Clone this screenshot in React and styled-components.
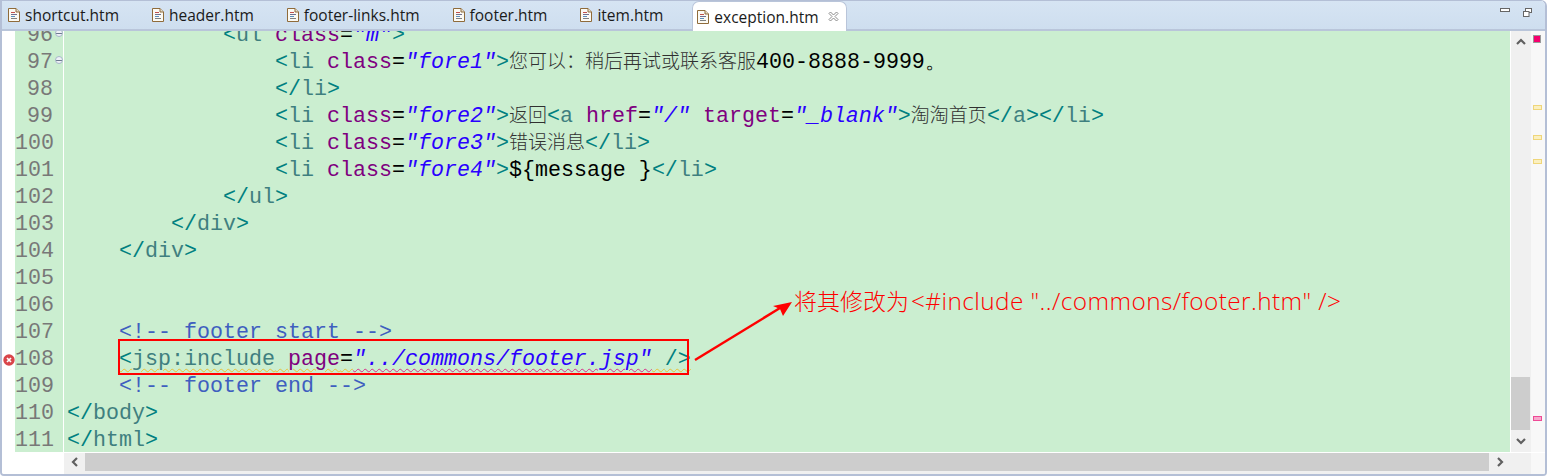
import React from 'react'
import styled, { createGlobalStyle } from 'styled-components'

const GlobalStyle = createGlobalStyle`
  html, body {
    margin: 0;
    padding: 0;
    background: #ffffff;
  }
`

const Window = styled.div`
  position: relative;
  box-sizing: border-box;
  width: 1547px;
  height: 476px;
  display: flex;
  flex-direction: column;
  border: 2px solid #b4bfd6;
  border-top-width: 1px;
  border-radius: 0 6px 4px 4px;
  background: #ffffff;
  overflow: hidden;
`

const TabBar = styled.div`
  height: 30px;
  flex: none;
  display: flex;
  align-items: stretch;
  box-sizing: border-box;
  border-bottom: 2px solid #b9c5da;
  background: linear-gradient(#d6e4f3, #cedeef);
  padding-left: 6px;
`

const Tab = styled.div`
  display: flex;
  align-items: center;
  gap: 5px;
  height: ${props => (props.active ? '30px' : '28px')};
  box-sizing: border-box;
  padding: ${props => (props.active ? '0 7px 0 4px' : '0 33px 0 0')};
  margin-left: ${props => (props.active ? '-4px' : '0')};
  background: ${props => (props.active ? '#ffffff' : 'transparent')};
  border: ${props => (props.active ? '1px solid #b9c5da' : 'none')};
  border-bottom: none;
  border-radius: 7px 7px 0 0;
  font-family: 'Open Sans', 'Liberation Sans', sans-serif;
  font-size: 15.5px;
  color: #1a1a1a;
  white-space: nowrap;
`

const TabClose = styled.span`
  display: flex;
  margin-left: 4px;
`

const WindowButtons = styled.div`
  margin-left: auto;
  display: flex;
  align-items: flex-start;
  gap: 13px;
  padding: 7px 13px 0 0;
`

const EditorRow = styled.div`
  flex: 1;
  min-height: 0;
  display: flex;
`

const CodeArea = styled.div`
  flex: 1;
  min-width: 0;
  overflow: hidden;
  background: #ffffff;
`

const Lines = styled.div`
  margin-top: -9px;
`

const Line = styled.div`
  display: grid;
  grid-template-columns: 13px 48px 1px 1fr;
  height: 27px;
`

const Marker = styled.div`
  display: flex;
  align-items: center;
  justify-content: flex-end;
  background: #ffffff;
`

const LineNumber = styled.div`
  position: relative;
  box-sizing: border-box;
  padding-right: 10px;
  background: #cbeed0;
  text-align: right;
  font-family: 'Liberation Mono', monospace;
  font-size: 21.67px;
  line-height: 27px;
  color: #787878;
`

const Fold = styled.span`
  position: absolute;
  top: 7px;
  right: 0;
  width: 8px;
  height: 8px;
  box-sizing: border-box;
  border: 1px solid #a9b6cc;
  border-radius: 50%;
  background: linear-gradient(to bottom, #eef1f6 3px, #6d7a90 3px, #6d7a90 4px, #eef1f6 4px);
`

const Separator = styled.div`
  background: #ffffff;
`

const Code = styled.div`
  background: #cbeed0;
  padding-left: 3px;
  font-family: 'Liberation Mono', monospace;
  font-size: 21.67px;
  line-height: 27px;
  white-space: pre;
  color: #000000;
`

const Bracket = styled.span`
  color: #008080;
`

const TagName = styled.span`
  color: #3f7f7f;
`

const Attr = styled.span`
  color: #7f007f;
`

const Value = styled.span`
  color: #2a00ff;
  font-style: italic;
`

const Note = styled.span`
  color: #3f5fbf;
`

const Cjk = styled.span`
  font-family: 'Noto Sans CJK SC', sans-serif;
  font-size: 19px;
  font-weight: 300;
  line-height: 0;
  color: #303030;
`

const Squiggle = styled.span`
  text-decoration: underline wavy ${props => props.color};
  text-decoration-thickness: 1px;
  text-underline-offset: 3px;
`

const VScroll = styled.div`
  width: 20px;
  flex: none;
  margin-left: 1px;
  display: flex;
  flex-direction: column;
  background: #f0f0f0;
`

const ArrowButton = styled.div`
  flex: none;
  height: ${props => props.size}px;
  display: flex;
  align-items: center;
  justify-content: center;
`

const VTrack = styled.div`
  flex: 1;
`

const VThumb = styled.div`
  flex: none;
  width: 19px;
  height: 53px;
  background: #cdcdcd;
`

const Overview = styled.div`
  position: relative;
  width: 14px;
  flex: none;
  background: #f8f8f8;
`

const Mark = styled.div`
  position: absolute;
  left: 2px;
  top: ${props => props.top}px;
  width: 9px;
  height: 5px;
  box-sizing: border-box;
  border: 1px solid ${props => props.border};
  background: ${props => props.fill};
`

const ErrorSquare = styled.div`
  position: absolute;
  left: 2px;
  top: 4px;
  width: 8px;
  height: 8px;
  box-sizing: border-box;
  border: 1px solid #999999;
  background: #f5006e;
`

const BottomRow = styled.div`
  flex: none;
  height: 21px;
  margin-top: 1px;
  display: flex;
  background: #ffffff;
`

const HSpacer = styled.div`
  width: 62px;
  flex: none;
`

const HScroll = styled.div`
  flex: 1;
  display: flex;
  background: #f0f0f0;
`

const HThumb = styled.div`
  flex: 1;
  height: 18px;
  background: #cdcdcd;
`

const HArrow = styled.div`
  flex: none;
  width: ${props => props.size}px;
  height: 18px;
  display: flex;
  align-items: center;
  justify-content: center;
`

const Corner = styled.div`
  width: 20px;
  flex: none;
  background: #f0f0f0;
`

const OverviewCorner = styled.div`
  width: 14px;
  flex: none;
  background: #f8f8f8;
`

const RedBox = styled.div`
  position: absolute;
  left: 116px;
  top: 338px;
  width: 571px;
  height: 36px;
  box-sizing: border-box;
  border: 2px solid #ff0000;
  pointer-events: none;
`

const Callout = styled.div`
  position: absolute;
  left: 792px;
  top: 285px;
  font-family: 'Open Sans', 'Noto Sans CJK SC', sans-serif;
  font-size: 24.4px;
  font-weight: 300;
  letter-spacing: 0.42px;
  line-height: 30px;
  white-space: nowrap;
  color: #ff0000;
`

const CalloutCjk = styled.span`
  font-family: 'Noto Sans CJK SC', sans-serif;
  font-size: 23px;
  letter-spacing: 0;
  line-height: 0;
  margin-right: 2px;
`

const ArrowSvg = styled.svg`
  position: absolute;
  left: 690px;
  top: 295px;
`

const FileIcon = () => (
  <svg width="12" height="14" viewBox="0 0 12 14">
    <path d="M0.5 0.5H8L11.5 4V13.5H0.5Z" fill="#fbfaf4" stroke="#8f6b3a" />
    <path d="M8 0.5V4H11.5" fill="#e6e0cf" stroke="#8f6b3a" />
    <path d="M3 4.5H7" stroke="#c0504d" />
    <path d="M3 6.5H9" stroke="#6f6f8f" />
    <path d="M3 8.5H7" stroke="#5a8fc0" />
    <path d="M3 10.5H9" stroke="#7f7f7f" />
  </svg>
)

const CloseIcon = () => (
  <svg width="11" height="11" viewBox="0 0 11 11">
    <path
      d="M1 2.5L2.5 1L5.5 4L8.5 1L10 2.5L7 5.5L10 8.5L8.5 10L5.5 7L2.5 10L1 8.5L4 5.5Z"
      fill="#ffffff"
      stroke="#8a8a8a"
    />
  </svg>
)

const MinimizeIcon = () => (
  <svg width="10" height="4" viewBox="0 0 10 4">
    <rect x="0.5" y="0.5" width="9" height="3" fill="#ffffff" stroke="#666666" />
  </svg>
)

const RestoreIcon = () => (
  <svg width="9" height="9" viewBox="0 0 9 9">
    <rect x="2.5" y="0.5" width="6" height="4" fill="#ffffff" stroke="#666666" />
    <rect x="0.5" y="3.5" width="5.5" height="5" fill="#ffffff" stroke="#666666" />
  </svg>
)

const ErrorIcon = () => (
  <svg width="12" height="12" viewBox="0 0 12 12">
    <circle cx="6" cy="6" r="5.7" fill="#d9454a" />
    <path d="M4 4L8 8M8 4L4 8" stroke="#ffffff" strokeWidth="1.7" />
  </svg>
)

const Chevron = ({ points }) => (
  <svg width="10" height="10" viewBox="0 0 10 10">
    <polyline points={points} fill="none" stroke="#606060" strokeWidth="2.2" />
  </svg>
)

const tabs = ['shortcut.htm', 'header.htm', 'footer-links.htm', 'footer.htm', 'item.htm']

const pad = n => ' '.repeat(n)

const Open = ({ name }) => (
  <>
    <Bracket>&lt;</Bracket>
    <TagName>{name}</TagName>
  </>
)

const Close = ({ name }) => (
  <>
    <Bracket>&lt;/</Bracket>
    <TagName>{name}</TagName>
    <Bracket>&gt;</Bracket>
  </>
)

const Li = ({ cls }) => (
  <>
    <Open name="li" /> <Attr>class</Attr>=<Value>"{cls}"</Value>
    <Bracket>&gt;</Bracket>
  </>
)

const rows = [
  { n: 96, fold: true, code: <>{pad(12)}<Open name="ul" /> <Attr>class</Attr>=<Value>"m"</Value><Bracket>&gt;</Bracket></> },
  { n: 97, fold: true, code: <>{pad(16)}<Li cls="fore1" /><Cjk>您可以：稍后再试或联系客服</Cjk>400-8888-9999。</> },
  { n: 98, code: <>{pad(16)}<Close name="li" /></> },
  {
    n: 99,
    code: (
      <>
        {pad(16)}<Li cls="fore2" /><Cjk>返回</Cjk><Open name="a" /> <Attr>href</Attr>=<Value>"/"</Value> <Attr>target</Attr>=<Value>"_blank"</Value><Bracket>&gt;</Bracket>
        <Cjk>淘淘首页</Cjk><Close name="a" /><Close name="li" />
      </>
    )
  },
  { n: 100, code: <>{pad(16)}<Li cls="fore3" /><Cjk>错误消息</Cjk><Close name="li" /></> },
  { n: 101, code: <>{pad(16)}<Li cls="fore4" />{'${message }'}<Close name="li" /></> },
  { n: 102, code: <>{pad(12)}<Close name="ul" /></> },
  { n: 103, code: <>{pad(8)}<Close name="div" /></> },
  { n: 104, code: <>{pad(4)}<Close name="div" /></> },
  { n: 105, code: null },
  { n: 106, code: null },
  { n: 107, code: <>{pad(4)}<Note>&lt;!-- footer start --&gt;</Note></> },
  {
    n: 108,
    error: true,
    code: (
      <>
        {pad(4)}
        <Squiggle color="#e8c23a"><Open name="jsp:include" /> <Attr>page</Attr>=</Squiggle>
        <Squiggle color="#d8308a"><Value>"../commons/footer.jsp"</Value></Squiggle>
        <Squiggle color="#e8c23a"> <Bracket>/&gt;</Bracket></Squiggle>
      </>
    )
  },
  { n: 109, code: <>{pad(4)}<Note>&lt;!-- footer end --&gt;</Note></> },
  { n: 110, code: <Close name="body" /> },
  { n: 111, code: <Close name="html" /> }
]

const App = () => (
  <>
    <GlobalStyle />
    <Window>
      <TabBar>
        {tabs.map(name => (
          <Tab key={name}>
            <FileIcon />
            {name}
          </Tab>
        ))}
        <Tab active>
          <FileIcon />
          exception.htm
          <TabClose>
            <CloseIcon />
          </TabClose>
        </Tab>
        <WindowButtons>
          <MinimizeIcon />
          <RestoreIcon />
        </WindowButtons>
      </TabBar>
      <EditorRow>
        <CodeArea>
          <Lines>
            {rows.map(row => (
              <Line key={row.n}>
                <Marker>{row.error && <ErrorIcon />}</Marker>
                <LineNumber>
                  {row.n}
                  {row.fold && <Fold />}
                </LineNumber>
                <Separator />
                <Code>{row.code}</Code>
              </Line>
            ))}
          </Lines>
        </CodeArea>
        <VScroll>
          <ArrowButton size={22}>
            <Chevron points="1,7 5,3 9,7" />
          </ArrowButton>
          <VTrack />
          <VThumb />
          <ArrowButton size={22}>
            <Chevron points="1,3 5,7 9,3" />
          </ArrowButton>
        </VScroll>
        <Overview>
          <ErrorSquare />
          <Mark top={74} border="#efd67a" fill="#fbf0c0" />
          <Mark top={104} border="#efd67a" fill="#fbf0c0" />
          <Mark top={128} border="#efd67a" fill="#fbf0c0" />
          <Mark top={385} border="#ee4a96" fill="#f8a8cc" />
        </Overview>
      </EditorRow>
      <BottomRow>
        <HSpacer />
        <HScroll>
          <HArrow size={21}>
            <Chevron points="7,1 3,5 7,9" />
          </HArrow>
          <HThumb />
          <HArrow size={22}>
            <Chevron points="3,1 7,5 3,9" />
          </HArrow>
        </HScroll>
        <Corner />
        <OverviewCorner />
      </BottomRow>
      <RedBox />
      <ArrowSvg width="106" height="70" viewBox="0 0 106 70">
        <path d="M3 64L88 12" stroke="#ff0000" strokeWidth="2.4" fill="none" />
        <path d="M100 6L81 10L88 13L91 20Z" fill="#ff0000" />
      </ArrowSvg>
      <Callout>
        <CalloutCjk>将其修改为</CalloutCjk>&lt;#include "../commons/footer.htm" /&gt;
      </Callout>
    </Window>
  </>
)

export default App
